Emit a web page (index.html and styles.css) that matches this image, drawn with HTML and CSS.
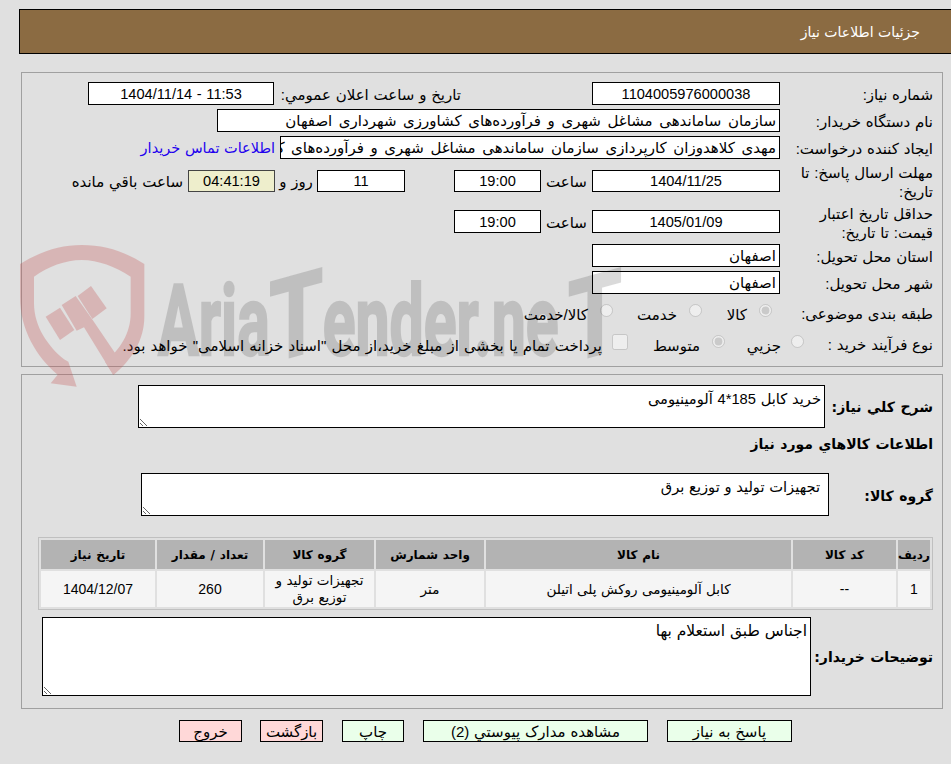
FILE: index.html
```html
<!DOCTYPE html>
<html lang="fa" dir="rtl">
<head>
<meta charset="utf-8">
<title>جزئیات اطلاعات نیاز</title>
<link rel="stylesheet" href="styles.css">
</head>
<body>
<header class="title-bar">جزئیات اطلاعات نیاز</header>

<section class="panel panel-info">
  <div class="row row-1">
    <span class="label">شماره نیاز:</span>
    <span class="field w188 num">1104005976000038</span>
    <span class="pub-label">تاریخ و ساعت اعلان عمومي:</span>
    <span class="field pub-field num">1404/11/14 - 11:53</span>
  </div>
  <div class="row row-2">
    <span class="label">نام دستگاه خریدار:</span>
    <span class="field w563 wide">سازمان ساماندهی مشاغل شهری و فرآورده‌های کشاورزی شهرداری اصفهان</span>
  </div>
  <div class="row row-3">
    <span class="label">ایجاد کننده درخواست:</span>
    <span class="field w500 wide">مهدی کلاهدوزان کارپردازی سازمان ساماندهی مشاغل شهری و فرآورده‌های کشاورزی شهرداری اصفهان</span>
    <a class="contact" href="#">اطلاعات تماس خریدار</a>
  </div>
  <div class="row row-4">
    <span class="label">مهلت ارسال پاسخ: تا تاریخ:</span>
    <span class="field w188 num">1404/11/25</span>
    <span class="hour">ساعت</span>
    <span class="field w87 num">19:00</span>
    <span class="field days num">11</span>
    <span class="and">روز و</span>
    <span class="field timer num">04:41:19</span>
    <span class="remain">ساعت باقي مانده</span>
  </div>
  <div class="row row-5">
    <span class="label">حداقل تاریخ اعتبار قیمت: تا تاریخ:</span>
    <span class="field w188 num">1405/01/09</span>
    <span class="hour">ساعت</span>
    <span class="field w87 num">19:00</span>
  </div>
  <div class="row row-6">
    <span class="label">استان محل تحویل:</span>
    <span class="field w188">اصفهان</span>
  </div>
  <div class="row row-7">
    <span class="label">شهر محل تحویل:</span>
    <span class="field w188">اصفهان</span>
  </div>
  <div class="row row-8">
    <span class="label">طبقه بندی موضوعی:</span>
    <label class="opt opt-a"><input type="radio" name="cat" checked disabled>کالا</label>
    <label class="opt opt-b"><input type="radio" name="cat" disabled>خدمت</label>
    <label class="opt opt-c"><input type="radio" name="cat" disabled>کالا/خدمت</label>
  </div>
  <div class="row row-9">
    <span class="label">نوع فرآیند خرید :</span>
    <label class="opt opt-d"><input type="radio" name="proc" disabled>جزیي</label>
    <label class="opt opt-e"><input type="radio" name="proc" checked disabled>متوسط</label>
    <label class="opt opt-f"><input type="checkbox" disabled>پرداخت تمام یا بخشی از مبلغ خرید،از محل "اسناد خزانه اسلامی" خواهد بود.</label>
  </div>
</section>

<section class="panel panel-goods">
  <div class="row desc-row">
    <span class="label-bold desc-label">شرح کلي نیاز:</span>
    <textarea class="box box-desc" readonly>خرید کابل 185*4 آلومینیومی</textarea>
  </div>
  <h2 class="heading">اطلاعات کالاهاي مورد نیاز</h2>
  <div class="row group-row">
    <span class="label-bold group-label">گروه کالا:</span>
    <textarea class="box box-group" readonly>تجهیزات تولید و توزیع برق</textarea>
  </div>
  <table class="items">
    <colgroup>
      <col class="c1"><col class="c2"><col class="c3"><col class="c4"><col class="c5"><col class="c6"><col class="c7">
    </colgroup>
    <thead>
      <tr><th>ردیف</th><th>کد کالا</th><th>نام کالا</th><th>واحد شمارش</th><th>گروه کالا</th><th>تعداد / مقدار</th><th>تاریخ نیاز</th></tr>
    </thead>
    <tbody>
      <tr><td>1</td><td>--</td><td class="ar">کابل آلومینیومی روکش پلی اتیلن</td><td class="ar">متر</td><td class="ar">تجهیزات تولید و توزیع برق</td><td>260</td><td>1404/12/07</td></tr>
    </tbody>
  </table>
  <div class="row note-row">
    <span class="label-bold note-label">توضیحات خریدار:</span>
    <textarea class="box box-note" readonly>اجناس طبق استعلام بها</textarea>
  </div>
</section>

<nav class="actions">
  <button class="btn ok b-reply">پاسخ به نیاز</button>
  <button class="btn ok b-docs">مشاهده مدارک پیوستي (2)</button>
  <button class="btn ok b-print">چاپ</button>
  <button class="btn bad b-back">بازگشت</button>
  <button class="btn bad b-exit">خروج</button>
</nav>

<div class="watermark" aria-hidden="true">
  <svg class="shield" viewBox="0 0 900 450" width="300" height="150">
    <path d="M30 72 C90 35 150 15 215 15 C285 15 345 35 403 72 L403 230 C403 300 365 360 310 405 L285 365 C330 330 362 280 362 220 L362 110 C315 80 265 60 215 60 C165 60 115 80 72 110 L72 190 C72 260 115 320 162 358 L175 365 L200 440 L122 430 L143 404 C80 350 30 270 30 170 Z"/>
    <polygon points="107,230 150,203 193,270 150,300"/>
    <polygon points="155,195 197,168 248,240 335,368 310,405 222,262 200,272"/>
    <polygon points="203,168 243,138 290,205 247,237"/>
  </svg>
  <span class="wm-text">Aria<span class="wm-t">T</span>ender.ne<span class="wm-t wm-last">T</span></span>
</div>
</body>
</html>
```
FILE: styles.css
```css
html, body { margin: 0; padding: 0; }
body {
  position: relative;
  width: 951px;
  height: 764px;
  overflow: hidden;
  background: #e0e0e0;
  color: #000;
  font-family: "Liberation Sans", "DejaVu Sans", sans-serif;
  font-size: 15px;
  word-spacing: .6px;
}
.title-bar {
  margin: 9px 0 0 19px;
  height: 45px;
  box-sizing: border-box;
  border: 1px solid #000;
  border-right: 0;
  background: #8b6b42;
  color: #fff;
  padding: 14px 31px 0 0;
  font-size: 14px;
}
.panel {
  margin: 0 8px 0 0;
  width: 922px;
  box-sizing: border-box;
  border: 1px solid #a0a0a0;
}
.panel-info { margin-top: 18px; height: 295px; padding: 9px 9px 0 0; }
.panel-goods { margin-top: 7px; height: 335px; padding: 10px 9px 0 0; }
.row { display: flex; align-items: center; }
.label { flex: none; box-sizing: border-box; width: 153px; padding-top: 2px; line-height: 19px; }
.field {
  flex: none;
  box-sizing: border-box;
  height: 23px;
  line-height: 22px;
  background: #fff;
  border: 1px solid #000;
  padding: 0 3px;
  overflow: hidden;
  white-space: nowrap;
}
.num { font-size: 14.6px; line-height: 23px; text-align: center; }
.wide { word-spacing: 2.4px; }
.w188 { width: 188px; }
.w563 { width: 563px; }
.w500 { width: 500px; }
.w87 { width: 87px; }
.row-1, .row-2, .row-3 { height: 23px; margin-bottom: 4px; }
.pub-label { margin-right: 131px; width: 181px; padding-top: 2px; white-space: nowrap; }
.pub-field { width: 186px; margin-right: 6px; direction: ltr; }
.contact { margin-right: 5px; color: #2200ee; font-size: 14.5px; text-decoration: none; white-space: nowrap; }
.row-4 { margin-top: 11px; height: 22px; }
.row-4 .field { height: 22px; line-height: 21px; }
.hour { width: 51px; padding-top: 2px; text-align: center; }
.days { width: 88px; margin-right: 49px; }
.and { width: 42px; padding-top: 2px; text-align: center; white-space: nowrap; }
.timer { width: 87px; background: #eeeecc; border-color: #444; }
.remain { margin-right: 5px; padding-top: 2px; white-space: nowrap; }
.row-5 { margin-top: 18px; height: 23px; }
.row-6 { margin-top: 11px; height: 23px; }
.row-7 { margin-top: 4px; height: 23px; }
.row-8 { margin-top: 7px; height: 23px; }
.row-9 { margin-top: 8px; height: 23px; }
.opt { display: flex; align-items: center; flex: none; padding-top: 4px; white-space: nowrap; }
.opt input { flex: none; margin: 0 0 8px 12px; }
.opt-a { margin-right: 8px; width: 70px; }
.opt-b { width: 89px; }
.opt-d { margin-right: -24px; width: 79px; }
.opt-d input { margin-left: 10px; }
.opt-e { width: 97px; }
.opt-f { word-spacing: 1px; }
.opt-f input { width: 16px; height: 16px; margin-left: 10px; }
.label-bold { flex: none; font-family: "DejaVu Sans", sans-serif; font-weight: bold; white-space: nowrap; font-size: 14px; }
.desc-row { height: 43px; }
.desc-label { width: 108px; }
.box {
  display: block;
  flex: none;
  box-sizing: border-box;
  background: #fff;
  border: 1px solid #000;
  border-radius: 0;
  margin: 0;
  padding: 4px 3px 2px;
  font-family: inherit;
  font-size: 14.7px;
  word-spacing: inherit;
  color: #000;
  outline: none;
}
.box-desc { width: 687px; height: 43px; }
.heading { margin: 6px 0 0; height: 30px; line-height: 21px; font-family: "DejaVu Sans", sans-serif; font-size: 14px; font-weight: bold; }
.group-row { height: 43px; margin-top: 9px; }
.group-label { width: 104px; padding-top: 3px; }
.box-group { width: 688px; height: 43px; padding-right: 8px; }
.items {
  margin: 21px 0 0;
  width: 895px;
  table-layout: fixed;
  border-collapse: separate;
  border-spacing: 2px;
  border: 1px solid #c0c0c0;
  font-size: 14px;
}
.c1 { width: 32px; }
.c2 { width: 103px; }
.c3 { width: 305px; }
.c4 { width: 108px; }
.c5 { width: 109px; }
.c6 { width: 106px; }
.c7 { width: 114px; }
.items th { height: 29px; padding: 0; background: #b3b3b3; font-family: "DejaVu Sans", sans-serif; font-size: 12px; }
.items td { height: 36px; padding: 0 3px; background: #f5f5f5; text-align: center; line-height: 17px; }
.items td.ar { font-size: 13.5px; }
.note-row { height: 79px; margin-top: 7px; }
.note-label { width: 122px; }
.box-note { width: 769px; height: 79px; font-size: 15.5px; }
.actions { display: flex; margin: 11px 159px 0 0; }
.btn {
  box-sizing: border-box;
  height: 22px;
  padding: 2px 0 0;
  border: 1px solid #000;
  border-radius: 0;
  font-family: inherit;
  font-size: 15px;
  word-spacing: inherit;
  line-height: 18px;
  color: #000;
}
.ok { background: #eaffea; }
.bad { background: #ffd8d8; }
.b-reply { width: 125px; }
.b-docs { width: 225px; margin-right: 19px; }
.b-print { width: 62px; margin-right: 19px; }
.b-back { width: 63px; margin-right: 19px; }
.b-exit { width: 63px; margin-right: 18px; }
.watermark {
  position: absolute;
  left: 10px;
  top: 240px;
  width: 620px;
  height: 150px;
  direction: ltr;
  pointer-events: none;
}
.shield { position: absolute; left: 0; top: 0; fill: #c24a4a; opacity: .28; }
.wm-text {
  position: absolute;
  left: 148px;
  top: 22px;
  font-family: "Roboto", sans-serif;
  font-weight: 700;
  font-size: 98px;
  line-height: 110px;
  word-spacing: 0;
  color: #000;
  opacity: .14;
  -webkit-text-stroke: 2.5px #000;
  white-space: nowrap;
  transform-origin: left top;
  transform: scaleX(.62);
}
.wm-t {
  display: inline-block;
  margin: 0 8px;
  font-size: 112px;
  line-height: 110px;
  transform: scaleX(1.25) skewY(-12deg);
}
.wm-last { margin-left: 24px; }
```
